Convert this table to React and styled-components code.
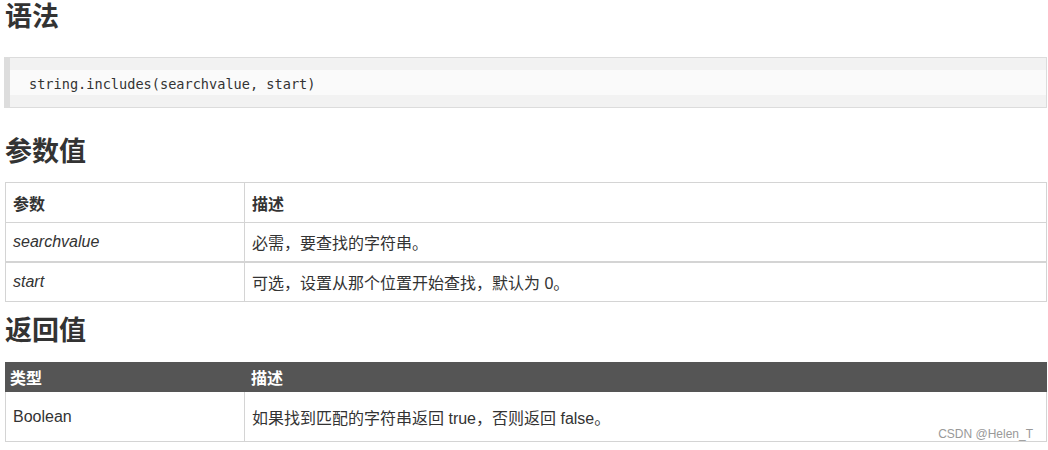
import React from "react";
import styled, { createGlobalStyle } from "styled-components";

const Global = createGlobalStyle`
  html, body { margin: 0; padding: 0; background: #fff; }
  body {
    font-family: "Liberation Sans", Arial, "Noto Sans CJK SC", sans-serif;
    color: #333;
  }
`;

const Page = styled.div`
  width: 1043px;
  padding-left: 4px;
  display: flex;
  flex-direction: column;
`;

const Heading = styled.h2`
  margin: ${(p) => p.$top || 0}px 0 0 1px;
  padding-top: 2px;
  font-size: 27px;
  line-height: 30px;
  height: 30px;
  font-weight: bold;
  color: #333;
  font-family: "Liberation Sans", "Noto Sans CJK SC", sans-serif;
`;

const CodeBox = styled.div`
  margin-top: 25px;
  background: #f2f2f2;
  border: 1px solid #dcdcdc;
  border-left: 6px solid #dddddd;
  padding: 12px 0;
`;

const Code = styled.pre`
  margin: 0;
  background: #fafafa;
  height: 23px;
  padding-top: 2px;
  line-height: 24px;
  padding-left: 19px;
  font-family: "DejaVu Sans Mono", "Liberation Mono", monospace;
  font-size: 13.6px;
  color: #333;
`;

const TableWrap = styled.div`
  position: relative;
  margin-top: ${(p) => p.$top}px;
  margin-left: 1px;
`;

const Table = styled.table`
  width: 1042px;
  table-layout: fixed;
  border-collapse: separate;
  border-spacing: 0;
  font-size: 16px;
  color: #333;
`;

const Cell = styled.td`
  box-sizing: border-box;
  height: ${(p) => p.$h}px;
  padding: 0 0 0 ${(p) => (p.$pad != null ? p.$pad : 7)}px;
  vertical-align: middle;
  text-align: left;
  border-right: 1px solid #d4d4d4;
  border-bottom: 1px solid #d4d4d4;
  border-left: ${(p) => (p.$first ? "1px solid #d4d4d4" : "none")};
  border-top: ${(p) => (p.$top ? "1px solid #d4d4d4" : "none")};
  font-style: ${(p) => (p.$italic ? "italic" : "normal")};
  font-weight: ${(p) => (p.$bold ? "bold" : "normal")};
  white-space: nowrap;
`;

const DarkHead = styled.th`
  box-sizing: border-box;
  height: 30px;
  padding: 0 0 0 ${(p) => p.$pad}px;
  background: #555555;
  color: #fff;
  font-weight: bold;
  text-align: left;
  vertical-align: middle;
`;

const Watermark = styled.span`
  position: absolute;
  right: 14px;
  bottom: 1px;
  font-size: 12px;
  line-height: 14px;
  color: #999;
  font-family: "Liberation Sans", Arial, sans-serif;
`;

export default function App() {
  return (
    <>
      <Global />
      <Page>
        <Heading>语法</Heading>
        <CodeBox>
          <Code>string.includes(searchvalue, start)</Code>
        </CodeBox>

        <Heading $top={27}>参数值</Heading>
        <TableWrap $top={15}>
          <Table>
            <colgroup>
              <col style={{ width: 240 }} />
              <col style={{ width: 802 }} />
            </colgroup>
            <tbody>
              <tr>
                <Cell $first $top $h={41} $bold>参数</Cell>
                <Cell $top $h={41} $bold>描述</Cell>
              </tr>
              <tr>
                <Cell $first $h={39} $italic>searchvalue</Cell>
                <Cell $h={39}>必需，要查找的字符串。</Cell>
              </tr>
              <tr>
                <Cell $first $top $h={40} $italic>start</Cell>
                <Cell $top $h={40}>可选，设置从那个位置开始查找，默认为 0。</Cell>
              </tr>
            </tbody>
          </Table>
        </TableWrap>

        <Heading $top={12}>返回值</Heading>
        <TableWrap $top={16}>
          <Table>
            <colgroup>
              <col style={{ width: 240 }} />
              <col style={{ width: 802 }} />
            </colgroup>
            <thead>
              <tr>
                <DarkHead $pad={5}>类型</DarkHead>
                <DarkHead $pad={6}>描述</DarkHead>
              </tr>
            </thead>
            <tbody>
              <tr>
                <Cell $first $h={50}>Boolean</Cell>
                <Cell $h={50}>如果找到匹配的字符串返回 true，否则返回 false。</Cell>
              </tr>
            </tbody>
          </Table>
          <Watermark>CSDN @Helen_T</Watermark>
        </TableWrap>
      </Page>
    </>
  );
}
